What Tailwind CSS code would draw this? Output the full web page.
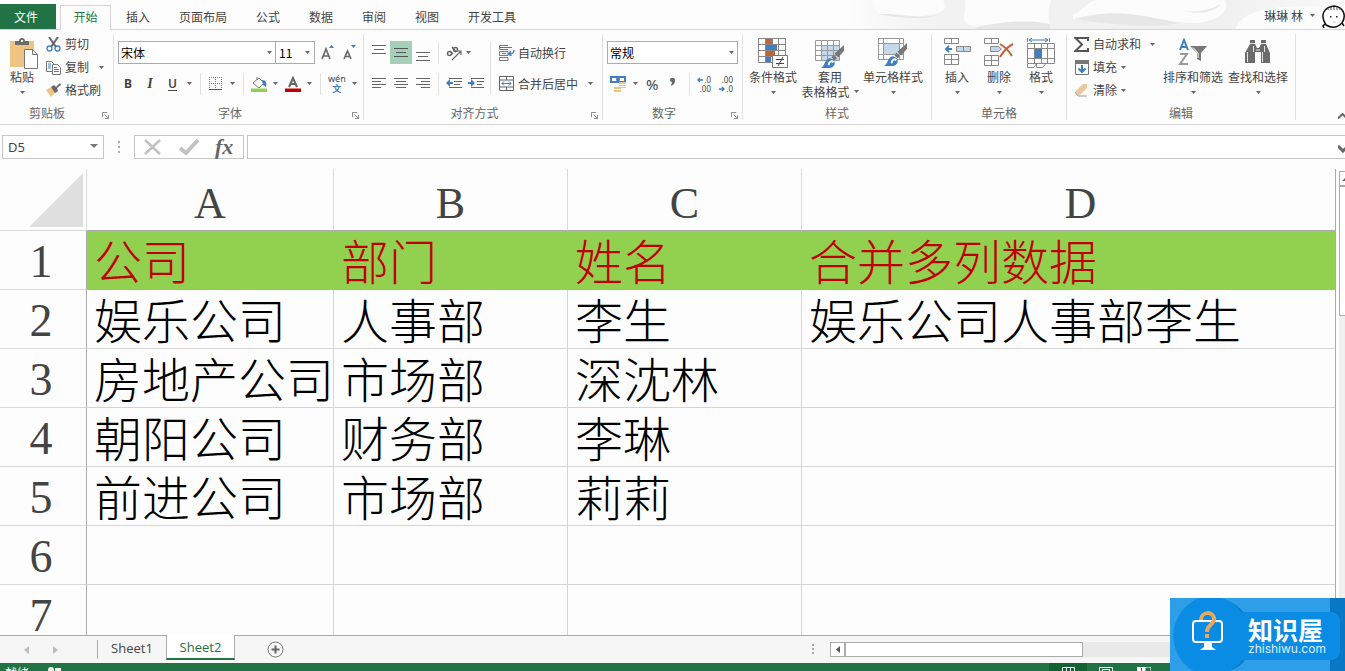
<!DOCTYPE html>
<html lang="zh-CN">
<head>
<meta charset="utf-8">
<meta name="viewport" content="width=device-width, initial-scale=1">
<title>Sheet2</title>
<script src="https://cdn.jsdelivr.net/npm/@tailwindcss/browser@4"></script>
</head>
<body class="flex h-screen flex-col overflow-hidden bg-[#fdfdfd] font-['Noto_Sans_CJK_SC',sans-serif] text-xs leading-4 text-[#444]">

<svg class="hidden">
  <symbol id="caret" viewBox="0 0 5 3"><path d="M0 0h5L2.500 3z" fill="#666"/></symbol>
  <symbol id="launcher" viewBox="0 0 8 8"><path d="M.5 6V.5H6M3 3l4 4M7.500 3.500v4h-4" fill="none" stroke="#777"/></symbol>
  <symbol id="brush" viewBox="0 0 24 24"><path d="M24 0v6l-6 7-4-4z" fill="#777"/><path d="M13 10l4 4-3 2-3-3z" fill="#777"/><path d="M0 24c4-1 4-11 10-10 6 1 6 9-1 10z" fill="#3f7fbf"/><path d="M8 21c0-4 3-5 5-3" fill="none" stroke="#fff" stroke-width="2"/></symbol>
</svg>

<!-- Tab strip -->
<header class="relative flex h-[30px] shrink-0 items-end border-b border-[#d4d4d4]">
  <svg class="absolute right-0 top-0 h-[29px] w-[500px]" viewBox="0 0 500 29" preserveAspectRatio="none">
    <defs><linearGradient id="fade"><stop offset="0" stop-color="#efefef" stop-opacity="0"/><stop offset=".2" stop-color="#f2f2f2"/><stop offset=".75" stop-color="#f0f0f0"/><stop offset="1" stop-color="#f9f9f9"/></linearGradient></defs>
    <path d="M0 0h500v29H0z" fill="url(#fade)"/>
    <path d="M28 0h70c5 10-1 14-15 15-20 4-30-2-50-1zM120 0h86c-3 10-3 15-1 24-35-8-45 5-80 2-12-6-2-14-5-26zM228 15c10-5 14-12 22-15h130c5 12-8 22-30 23-45-1-85-17-122-4z" fill="#fcfcfc"/>
    <path d="M32 14c25-1 40 5 60 1-12 6-45 2-60-1zM135 26c25-4 45-7 70-2v5h-75zM232 19c40-12 65-3 105 4-30 5-75 2-105-4zM338 11c15 2 28-1 38-7-5 8-25 11-38 7z" fill="#e7e7e7"/>
    <path d="M390 29c10-20 35-25 110-22v22z" fill="#fcfcfc"/>
  </svg>
  <button class="h-[25px] w-14 bg-[#217346] pr-1 text-white">文件</button>
  <button class="relative ml-1 -mb-px h-[25px] w-[51px] border border-b-0 border-[#d4d4d4] bg-[#fdfdfd] pb-[2px] text-[#217346]">开始</button>
  <nav class="ml-[15px] flex h-[25px] items-center gap-[29px]">
    <button>插入</button><button>页面布局</button><button>公式</button><button>数据</button><button>审阅</button><button>视图</button><button>开发工具</button>
  </nav>
  <div class="relative ml-auto flex h-[25px] items-center">
    <button class="flex items-center gap-[7px] pb-[2px]">琳琳 林<svg class="h-[3px] w-[5px]"><use href="#caret"/></svg></button>
    <svg class="ml-[7px] h-6 w-[23px]" viewBox="0 0 23 24"><path d="M0 0h23v24H0z" fill="#fff"/><path d="M4 20C-3 9 3 2 12 1c9 1 13 9 8 17-5 5-11 5-16 2zM3 19l-2 2 1 2M20 18l2 3" fill="none" stroke="#111" stroke-width="1.500"/><path d="M6 3v2M9 2v3M12 2v3M15 2v3M18 3v2" stroke="#555"/><path d="M8 11h1.500v1.500H8zM14 11h1.500v1.500H14z" fill="#222"/><path d="M11 17h3" stroke="#e6b8b8"/></svg>
  </div>
</header>

<!-- Ribbon -->
<section class="flex h-[95px] shrink-0 overflow-hidden border-b border-[#d4d4d4] py-1">

  <div class="flex w-[114px] shrink-0 flex-col border-r border-[#e1e1e1]">
    <div class="flex grow">
      <button class="flex w-11 flex-col items-center pt-1">
        <svg class="ml-1 h-[31px] w-7" viewBox="0 0 28 31"><path d="M0 3h24v26H0z" fill="#edc483"/><path d="M5 7V3h4c0-4 6-4 6 0h4v4z" fill="#6b6b6b"/><path d="M11 2h2v2h-2z" fill="#fff"/><path d="M14.500 11.500h8l5 5v14h-13z" fill="#fff" stroke="#777"/><path d="M22.500 11.500v5h5" fill="none" stroke="#777"/></svg>
        <span>粘贴</span><svg class="mt-[6px] h-[3px] w-[5px]"><use href="#caret"/></svg>
      </button>
      <div class="flex flex-col gap-[7px] pl-[2px] pt-[2px]">
        <button class="flex items-center gap-1"><svg class="size-[15px]" viewBox="0 0 15 15"><path d="M3 0l7 10M12 0L5 10" stroke="#666" stroke-width="2"/><circle cx="3.500" cy="11.500" r="2.500" fill="#fff" stroke="#3f7fbf" stroke-width="1.300"/><circle cx="11.500" cy="11.500" r="2.500" fill="#fff" stroke="#3f7fbf" stroke-width="1.300"/></svg>剪切</button>
        <button class="flex items-center gap-1"><svg class="h-[15px] w-[15px]" viewBox="0 0 15 15"><path d="M.5 1.500h5l2 2v8h-7z" fill="#fff" stroke="#777"/><path d="M2 4h3M2 6h3M2 8h3" stroke="#3f7fbf"/><path d="M6.500 4.500h5l3 3v7h-8z" fill="#fff" stroke="#777"/><path d="M8 7.500h3M8 9.500h5M8 11.500h5" stroke="#3f7fbf"/></svg>复制<svg class="ml-[6px] h-[3px] w-[5px]"><use href="#caret"/></svg></button>
        <button class="flex items-center gap-1"><svg class="size-[15px]" viewBox="0 0 15 15"><path d="M0 7l5-3 5 5-5 5z" fill="#edc483"/><path d="M5 4l3-2 2 2 4-4 1 2-4 3 1 3-3 2z" fill="#666"/></svg>格式刷</button>
      </div>
    </div>
    <div class="flex h-5 items-center pt-[6px] text-[#666]"><span class="grow pr-5 text-center">剪贴板</span><button aria-label="剪贴板设置" class="-ml-3 mr-1 mt-1"><svg class="size-[7px]"><use href="#launcher"/></svg></button></div>
  </div>

  <div class="flex w-[250px] shrink-0 flex-col border-r border-[#e1e1e1]">
    <div class="flex grow flex-col">
      <div class="flex h-[37px] items-center pl-1">
        <div class="relative"><select aria-label="字体" class="h-[23px] w-[158px] appearance-none border border-[#ababab] bg-white pl-[2px] text-black"><option>宋体</option></select><svg class="pointer-events-none absolute right-1 top-[10px] h-[3px] w-[5px]"><use href="#caret"/></svg></div>
        <div class="relative -ml-px"><select aria-label="字号" class="h-[23px] w-10 appearance-none border border-[#ababab] bg-white pl-[3px] text-black"><option>11</option></select><svg class="pointer-events-none absolute right-[5px] top-[10px] h-[3px] w-[5px]"><use href="#caret"/></svg></div>
        <button aria-label="增大字号" class="ml-[6px]"><svg class="h-4 w-3.5" viewBox="0 0 14 16"><path d="M1 14L5 4l4 10M2.500 11h5" fill="none" stroke="#666" stroke-width="1.600"/><path d="M8 3l2.500-3L13 3z" fill="#3f7fbf"/></svg></button>
        <button aria-label="减小字号" class="ml-2"><svg class="h-4 w-3.5" viewBox="0 0 14 16"><path d="M1 14l3.500-8L8 14M2.500 11.500h4" fill="none" stroke="#666" stroke-width="1.600"/><path d="M8 0l2.500 3L13 0z" fill="#3f7fbf"/></svg></button>
      </div>
      <div class="flex h-[25px] items-center pl-[10px] font-['Noto_Sans',sans-serif]">
        <button class="w-2 font-bold">B</button>
        <button class="ml-[14px] w-2 font-['Liberation_Serif',serif] text-sm font-bold italic">I</button>
        <button class="ml-[14px] w-2 font-semibold underline underline-offset-2">U</button>
        <svg class="ml-[11px] h-[3px] w-[5px]"><use href="#caret"/></svg>
        <i class="ml-[8px] h-[22px] w-px bg-[#e1e1e1]"></i>
        <button aria-label="边框" class="ml-2"><svg class="size-[13px]" viewBox="0 0 13 13"><path d="M0 .5h13M0 6.500h13M.5 0v12M6.500 0v12M12.500 0v12" stroke="#777" stroke-dasharray="1 1"/><path d="M0 12.500h13" stroke="#555"/></svg></button>
        <svg class="ml-2 h-[3px] w-[5px]"><use href="#caret"/></svg>
        <i class="ml-[8px] h-[22px] w-px bg-[#e1e1e1]"></i>
        <button aria-label="填充颜色" class="ml-[7px]"><svg class="size-4" viewBox="0 0 16 16"><path d="M3 6l5-4 5 5-5 5-6-5zM6 4V1" fill="#fff" stroke="#777"/><path d="M11 4c4 0 5 3 4 7l-3-2z" fill="#3f7fbf"/><path d="M0 12.500h16V16H0z" fill="#92d050"/></svg></button>
        <svg class="ml-[6px] h-[3px] w-[5px]"><use href="#caret"/></svg>
        <button aria-label="字体颜色" class="ml-[7px]"><svg class="size-4" viewBox="0 0 16 16"><path d="M4 11L8 2l4 9M5 8h6" fill="none" stroke="#666" stroke-width="2"/><path d="M0 12.500h16V16H0z" fill="#c00000"/></svg></button>
        <svg class="ml-[6px] h-[3px] w-[5px]"><use href="#caret"/></svg>
        <i class="ml-[8px] h-[22px] w-px bg-[#e1e1e1]"></i>
        <button class="ml-[7px] flex flex-col items-center text-[9px] leading-[10px]"><span>wén</span><span class="font-['Noto_Sans_CJK_SC'] font-bold text-[#3f7fbf]">文</span></button>
        <svg class="ml-[6px] h-[3px] w-[5px]"><use href="#caret"/></svg>
      </div>
    </div>
    <div class="flex h-5 items-center pt-[6px] text-[#666]"><span class="grow pr-[18px] text-center">字体</span><button aria-label="字体设置" class="-ml-3 mr-1 mt-1"><svg class="size-[7px]"><use href="#launcher"/></svg></button></div>
  </div>

  <div class="flex w-[239px] shrink-0 flex-col border-r border-[#e1e1e1]">
    <div class="flex grow">
      <div class="flex flex-col">
        <div class="flex h-[37px] items-center pl-1">
          <button aria-label="顶端对齐" class="flex h-[23px] w-[22px] items-center justify-center"><svg class="h-4 w-3.5"><path d="M0 .5h14M2 4.500h10M0 8.500h14" stroke="#666"/></svg></button>
          <button aria-label="垂直居中" class="flex h-[23px] w-[22px] items-center justify-center bg-[#a6cfba]"><svg class="h-4 w-3.5"><path d="M0 3.500h14M2 7.500h10M0 11.500h14" stroke="#555"/></svg></button>
          <button aria-label="底端对齐" class="flex h-[23px] w-[22px] items-center justify-center"><svg class="h-4 w-3.5"><path d="M0 7.500h14M2 11.500h10M0 15.500h14" stroke="#666"/></svg></button>
          <i class="ml-[4px] h-[22px] w-px bg-[#e1e1e1]"></i>
          <button aria-label="方向" class="ml-[7px]"><svg class="h-4 w-[17px]" viewBox="0 0 17 16"><g fill="none" stroke="#666" stroke-width="1.500"><circle cx="3.500" cy="8.500" r="2"/><path d="M4 6l3 3M6 2l4 5"/><circle cx="9.500" cy="4.500" r="2"/></g><path d="M6 15L15 6M11 6h4v4" fill="none" stroke="#666" stroke-width="1.200"/></svg></button>
          <svg class="ml-[3px] h-[3px] w-[5px]"><use href="#caret"/></svg>
        </div>
        <div class="flex h-[25px] items-center pl-2">
          <button aria-label="左对齐"><svg class="h-3 w-3.5"><path d="M0 .5h14M0 3.500h9M0 6.500h14M0 9.500h9" stroke="#666"/></svg></button>
          <button aria-label="居中" class="ml-2"><svg class="h-3 w-3.5"><path d="M0 .5h14M2 3.500h10M0 6.500h14M2 9.500h10" stroke="#666"/></svg></button>
          <button aria-label="右对齐" class="ml-2"><svg class="h-3 w-3.5"><path d="M0 .5h14M5 3.500h9M0 6.500h14M5 9.500h9" stroke="#666"/></svg></button>
          <i class="ml-2 h-[22px] w-px bg-[#e1e1e1]"></i>
          <button aria-label="减少缩进" class="ml-[7px]"><svg class="h-3 w-4"><path d="M3 .5h13M8 3.500h8M8 6.500h6M3 9.500h13" stroke="#666"/><path d="M0 5l4-4v3h3v2H4v3z" fill="#3f7fbf"/></svg></button>
          <button aria-label="增加缩进" class="ml-[6px]"><svg class="h-3 w-4"><path d="M3 .5h13M9 3.500h7M9 6.500h5M3 9.500h13" stroke="#666"/><path d="M7 5L3 1v3H0v2h3v3z" fill="#3f7fbf"/></svg></button>
        </div>
      </div>
      <i class="ml-[6px] mt-[7px] h-[54px] w-px bg-[#e1e1e1]"></i>
      <div class="flex flex-col pl-2">
        <button class="flex h-[37px] items-center gap-[3px]"><svg class="size-4" viewBox="0 0 16 16"><path d="M9 .5H.5v4H9M.5 6.500H9v4H.5zM.5 12.500H9v3H.5zM3 8.500h4" fill="none" stroke="#777"/><path d="M1 2.500h12" stroke="#3f7fbf"/><path d="M15 5c0 3-1 4-5 4M12 6L9.500 9l3 2" fill="none" stroke="#3f7fbf" stroke-width="1.500"/></svg>自动换行</button>
        <button class="flex h-[25px] items-center gap-[3px]"><svg class="size-4" viewBox="0 0 16 16"><path d="M.5.500h14v14H.5zM.5 4h14M.5 11h14M7.500.5V4M7.500 11v3.500" fill="none" stroke="#666"/><path d="M3 7.500h9M5 5.500l-2 2 2 2M10 5.500l2 2-2 2" fill="none" stroke="#3f7fbf"/></svg>合并后居中<svg class="ml-[7px] h-[3px] w-[5px]"><use href="#caret"/></svg></button>
      </div>
    </div>
    <div class="flex h-5 items-center pt-[6px] text-[#666]"><span class="grow pr-[18px] text-center">对齐方式</span><button aria-label="对齐设置" class="-ml-3 mr-1 mt-1"><svg class="size-[7px]"><use href="#launcher"/></svg></button></div>
  </div>

  <div class="flex w-[140px] shrink-0 flex-col border-r border-[#e1e1e1]">
    <div class="flex grow flex-col">
      <div class="flex h-[37px] items-center pl-1">
        <div class="relative"><select aria-label="数字格式" class="h-[23px] w-[131px] appearance-none border border-[#ababab] bg-white pl-[2px] text-black"><option>常规</option></select><svg class="pointer-events-none absolute right-1 top-[10px] h-[3px] w-[5px]"><use href="#caret"/></svg></div>
      </div>
      <div class="flex h-[25px] items-center pl-[7px]">
        <button aria-label="会计数字格式"><svg class="h-4 w-[17px]" viewBox="0 0 17 16"><path d="M1 1h14v5H1z" fill="#fff" stroke="#3f7fbf" stroke-width="2"/><circle cx="8" cy="3.500" r="2" fill="#3f7fbf"/><path d="M9 6h7v6H9zM4 11h7v5H4z" fill="#edc483"/><path d="M9 8.500h8M9 10.500h8M4 13.500h7" stroke="#fff"/></svg></button>
        <svg class="ml-[6px] h-[3px] w-[5px]"><use href="#caret"/></svg>
        <button aria-label="百分比样式" class="ml-2 w-3 font-['Noto_Sans',sans-serif] text-[15px]">%</button>
        <button aria-label="千位分隔" class="ml-3 mb-1"><svg class="h-2 w-[5px]"><path d="M0 2c0-3 5-3 5 0 0 4-2 5-4 6l1-4C1 4 0 3 0 2z" fill="#666"/></svg></button>
        <i class="ml-[14px] h-[22px] w-px bg-[#e1e1e1]"></i>
        <button class="relative ml-[7px] flex w-[14px] flex-col items-end font-['Noto_Sans',sans-serif] text-[8px] leading-[9px]"><span>.0</span><span>.00</span><svg class="absolute left-0 top-[2px] h-[6px] w-[6px]"><path d="M6 3H1M3 1L1 3l2 2" fill="none" stroke="#3f7fbf" stroke-width="1.400"/></svg></button>
        <button class="relative ml-2 flex w-[14px] flex-col items-end font-['Noto_Sans',sans-serif] text-[8px] leading-[9px]"><span>.00</span><span>.0</span><svg class="absolute bottom-px left-0 h-[6px] w-[6px]"><path d="M0 3h5M3 1l2 2-2 2" fill="none" stroke="#3f7fbf" stroke-width="1.400"/></svg></button>
      </div>
    </div>
    <div class="flex h-5 items-center pt-[6px] text-[#666]"><span class="grow pr-[18px] text-center">数字</span><button aria-label="数字设置" class="-ml-3 mr-1 mt-1"><svg class="size-[7px]"><use href="#launcher"/></svg></button></div>
  </div>

  <div class="flex w-[189px] shrink-0 flex-col border-r border-[#e1e1e1]">
    <div class="flex grow pl-1">
      <button class="flex w-[52px] flex-col items-center pt-1">
        <svg class="h-[31px] w-[31px]" viewBox="0 0 31 31"><path d="M.5.500h27v24H.5z" fill="#fff"/><path d="M8 1h6v5H8zM8 13h9v5H8z" fill="#c0643a"/><path d="M8 7h11v5H8zM8 19h5v5H8z" fill="#3f7fbf"/><path d="M.5.500h27v24H.5zM7.500.5v24M20.500.5v24M.5 6.500h27M.5 12.500h27M.5 18.500h27M14.500.5v6" fill="none" stroke="#888"/><path d="M14.500 17.500h15v12h-15z" fill="#fff" stroke="#777"/><path d="M18 21.500h8M18 25.500h8M25 19l-5 9" stroke="#444"/></svg>
        <span class="whitespace-nowrap">条件格式</span><svg class="mt-[6px] h-[3px] w-[5px]"><use href="#caret"/></svg>
      </button>
      <button class="ml-[2px] flex w-[58px] flex-col items-center pt-1 leading-[15px]">
        <svg class="h-[31px] w-[30px]" viewBox="0 0 30 31"><path d="M.5 2.500h24v20H.5z" fill="#fff"/><path d="M7 8h17v14H7z" fill="#c5d8ea"/><path d="M.5 2.500h24v20H.5zM6.500 2.500v20M12.500 2.500v20M18.500 2.500v20M.5 7.500h24M.5 12.500h24M.5 17.500h24" fill="none" stroke="#999"/><use href="#brush" x="6" y="7" width="23" height="23"/></svg>
        <span>套用</span><span class="flex items-center gap-1 whitespace-nowrap">表格格式<svg class="h-[3px] w-[5px]"><use href="#caret"/></svg></span>
      </button>
      <button class="flex w-[68px] flex-col items-center pt-1">
        <svg class="h-[31px] w-[30px]" viewBox="0 0 30 31"><path d="M.5.500h25v21H.5z" fill="#fff"/><path d="M6 6h15v10H6z" fill="#c5d8ea"/><path d="M.5.500h25v21H.5zM5.500.5v21M21.500.5v21M.5 5.500h25M.5 16.500h25" fill="none" stroke="#999"/><use href="#brush" x="6" y="5" width="23" height="23"/></svg>
        <span class="whitespace-nowrap">单元格样式</span><svg class="mt-[6px] h-[3px] w-[5px]"><use href="#caret"/></svg>
      </button>
    </div>
    <div class="flex h-5 items-center justify-center pt-[6px] text-[#666]">样式</div>
  </div>

  <div class="flex w-[135px] shrink-0 flex-col border-r border-[#e1e1e1]">
    <div class="flex grow pl-1">
      <button class="flex w-[42px] flex-col items-center pt-1">
        <svg class="h-[31px] w-[27px]" viewBox="0 0 27 31"><path d="M.5.500h14v5H.5zM7.500.5v5M.5 16.500h14v10H.5zM7.500 16.500v10M.5 21.500h14" fill="#fff" stroke="#888"/><path d="M12.500 8.500h14v5h-14zM19.500 8.500v5" fill="#c5d8ea" stroke="#888"/><path d="M8 11H2M5 8l-3 3 3 3" fill="none" stroke="#3f7fbf" stroke-width="1.800"/></svg>
        <span>插入</span><svg class="mt-[6px] h-[3px] w-[5px]"><use href="#caret"/></svg>
      </button>
      <button class="flex w-[42px] flex-col items-center pt-1">
        <svg class="h-[31px] w-[30px]" viewBox="0 0 30 31"><path d="M.5.500h14v5H.5zM7.500.5v5M.5 17.500h14v10H.5zM7.500 17.500v10M.5 22.500h14" fill="#fff" stroke="#888"/><path d="M6.500 8.500h8l3 2.500-3 2.500h-8z" fill="#c5d8ea" stroke="#888"/><path d="M16 6c5 3 9 7 12 12M29 6c-6 3-10 8-13 13" fill="none" stroke="#c0643a" stroke-width="2"/></svg>
        <span>删除</span><svg class="mt-[6px] h-[3px] w-[5px]"><use href="#caret"/></svg>
      </button>
      <button class="flex w-[42px] flex-col items-center pt-1">
        <svg class="h-[31px] w-[28px]" viewBox="0 0 28 31"><path d="M.5 0v4M22.500 0v4M2 2h19M5 0L2 2l3 2M18 0l3 2-3 2" fill="none" stroke="#3f7fbf"/><path d="M.5 5.500h27v20H.5zM7.500 5.500v20M14.500 5.500v5M20.500 5.500v20M.5 10.500h27M.5 20.500h27M14.500 20.500v5" fill="#fff" stroke="#888"/><path d="M8 11h7v9H8z" fill="#3f7fbf"/><path d="M.5 26v3.500h6l3-3.500v3.500h6l3-3.500" fill="none" stroke="#888"/></svg>
        <span>格式</span><svg class="mt-[6px] h-[3px] w-[5px]"><use href="#caret"/></svg>
      </button>
    </div>
    <div class="flex h-5 items-center justify-center pt-[6px] text-[#666]">单元格</div>
  </div>

  <div class="flex w-[229px] shrink-0 flex-col border-r border-[#e1e1e1]">
    <div class="flex grow pl-[7px]">
      <div class="flex w-[86px] flex-col gap-[7px] pt-[2px]">
        <button class="flex items-center gap-1"><svg class="h-[15px] w-[15px]" viewBox="0 0 15 15"><path d="M14 4V1H1.500L8 7.500 1.500 14H14v-3" fill="none" stroke="#555" stroke-width="2"/></svg>自动求和<svg class="ml-[5px] h-[3px] w-[5px]"><use href="#caret"/></svg></button>
        <button class="flex items-center gap-1"><svg class="h-[15px] w-[15px]" viewBox="0 0 15 15"><path d="M1.500.500h13v14h-13z" fill="#fff" stroke="#777"/><path d="M1 0h14v4H1z" fill="#777"/><path d="M8 5v7M4.500 8.500L8 12l3.500-3.500" fill="none" stroke="#3f7fbf" stroke-width="2"/></svg>填充<svg class="h-[3px] w-[5px]"><use href="#caret"/></svg></button>
        <button class="flex items-center gap-1"><svg class="h-[15px] w-[15px]" viewBox="0 0 15 15"><path d="M9 1h4v4l-7 7H4L1 9z" fill="#edc6a0"/><path d="M1 9l3 4h9" fill="none" stroke="#999"/></svg>清除<svg class="h-[3px] w-[5px]"><use href="#caret"/></svg></button>
      </div>
      <button class="flex w-[66px] flex-col items-center pt-1">
        <svg class="h-[31px] w-[30px]" viewBox="0 0 30 31"><path d="M2 12L6 2l4 10M3.500 9h5" fill="none" stroke="#3f7fbf" stroke-width="2"/><path d="M2 16h7l-7 10h8" fill="none" stroke="#999" stroke-width="2"/><path d="M12 8h17l-6 7v8l-4-2v-6z" fill="#777"/><path d="M15 9.500l5 5.500v5" fill="none" stroke="#fff"/></svg>
        <span class="whitespace-nowrap">排序和筛选</span><svg class="mt-[6px] h-[3px] w-[5px]"><use href="#caret"/></svg>
      </button>
      <button class="flex w-[64px] flex-col items-center pt-1">
        <svg class="h-[31px] w-[26px]" viewBox="0 0 26 31"><path d="M5 2h5v4l2 4h2l2-4V2h5v4l4 9v10h-9V14h-6v11H0V15l5-9z" fill="#6b6b6b"/><path d="M5 5.500h5M16 5.500h5M2.500 14v10M17.500 14v10M8.500 8v6M19.500 8v6M11 12h4" stroke="#fff" stroke-width=".8"/></svg>
        <span class="whitespace-nowrap">查找和选择</span><svg class="mt-[6px] h-[3px] w-[5px]"><use href="#caret"/></svg>
      </button>
    </div>
    <div class="flex h-5 items-center justify-center pt-[6px] text-[#666]">编辑</div>
  </div>
  <button aria-label="折叠功能区" class="ml-auto self-end pb-px"><svg class="h-[6px] w-[7px]"><path d="M0 5.500L4.500 1l4 4" fill="none" stroke="#666" stroke-width="2"/></svg></button>
</section>

<!-- Formula bar -->
<div class="flex h-11 shrink-0 items-start pl-[2px] pt-[10px]">
  <div class="relative"><input aria-label="名称框" value="D5" class="h-6 w-[102px] border border-[#c6c6c6] bg-white pl-[5px] font-['Noto_Sans',sans-serif] text-[13px]"><svg class="absolute right-[6px] top-[9px] h-1 w-2"><path d="M0 0h8L4 4z" fill="#777"/></svg></div>
  <svg class="ml-[14px] mt-[6px] h-3 w-[3px]"><path d="M0 1h2M0 6h2M0 11h2" stroke="#aaa" stroke-width="2"/></svg>
  <div class="ml-[13px] flex h-6 w-[110px] shrink-0 items-center border border-[#c6c6c6] bg-white">
    <button aria-label="取消" class="ml-2"><svg class="h-4 w-[19px]"><path d="M2 1l15 14M17 1L2 15" stroke="#c2c2c2" stroke-width="2.500"/></svg></button>
    <button aria-label="输入" class="ml-[17px]"><svg class="h-4 w-5"><path d="M1 9l6 5L19 1" fill="none" stroke="#c2c2c2" stroke-width="4"/></svg></button>
    <button class="ml-4 font-['Liberation_Serif',serif] text-[22px] leading-6 font-bold italic text-[#666]">fx</button>
  </div>
  <input aria-label="编辑栏" class="ml-[3px] h-6 min-w-0 grow border border-r-0 border-[#c6c6c6] bg-white px-1">
  <button aria-label="展开编辑栏" class="-ml-[7px] mt-[10px]"><svg class="h-2 w-[7px]"><path d="M0 1l5 5 4-4" fill="none" stroke="#666" stroke-width="3"/></svg></button>
</div>

<!-- Sheet -->
<main class="flex min-h-0 grow overflow-hidden">
  <div class="min-w-0 grow overflow-hidden border-r border-[#ababab]">
    <table class="w-full table-fixed border-separate border-spacing-0 text-left text-[48px] leading-[56px] font-light text-black">
      <colgroup><col class="w-[87px]"><col class="w-[247px]"><col class="w-[234px]"><col class="w-[234px]"><col></colgroup>
      <thead class="font-['Liberation_Serif',serif] text-[44px] text-[#444]">
        <tr class="h-[62px] text-center">
          <td class="border-r border-b border-[#dadada] p-0 align-bottom"><svg class="mb-[3px] ml-auto mr-[3px] h-[54px] w-[54px]"><path d="M54 0v54H0z" fill="#dfdfdf"/></svg></td>
          <th scope="col" class="border-r border-b border-[#dadada] border-b-[#ababab] p-0 pt-2 text-center font-normal leading-[50px]">A</th>
          <th scope="col" class="border-r border-b border-[#dadada] border-b-[#ababab] p-0 pt-2 text-center font-normal leading-[50px]">B</th>
          <th scope="col" class="border-r border-b border-[#dadada] border-b-[#ababab] p-0 pt-2 text-center font-normal leading-[50px]">C</th>
          <th scope="col" class="border-b border-b-[#ababab] p-0 pt-2 pl-6 text-center font-normal leading-[50px]">D</th>
        </tr>
      </thead>
      <tbody class="[&_td]:h-[59px] [&_td]:whitespace-nowrap [&_td]:border-b [&_td]:border-r [&_td]:border-[#d4d4d4] [&_td]:pb-[2px] [&_td]:pt-0 [&_td]:pr-0 [&_td]:pl-[7px] [&_td:last-child]:border-r-0 [&_th]:border-b [&_th]:border-r [&_th]:border-b-[#dadada] [&_th]:border-r-[#ababab] [&_th]:p-0 [&_th]:pt-1 [&_th]:pr-1 [&_th]:text-center [&_th]:text-[46px] [&_th]:leading-[54px] [&_th]:font-['Liberation_Serif',serif] [&_th]:font-normal [&_th]:text-[#444]">
        <tr class="bg-[#92d050] text-[#c00000] [&>td]:border-[#92d050]"><th scope="row" class="bg-[#fdfdfd]">1</th><td>公司</td><td>部门</td><td>姓名</td><td>合并多列数据</td></tr>
        <tr><th scope="row">2</th><td>娱乐公司</td><td>人事部</td><td>李生</td><td>娱乐公司人事部李生</td></tr>
        <tr><th scope="row">3</th><td>房地产公司</td><td>市场部</td><td>深沈林</td><td></td></tr>
        <tr><th scope="row">4</th><td>朝阳公司</td><td>财务部</td><td>李琳</td><td></td></tr>
        <tr><th scope="row">5</th><td>前进公司</td><td>市场部</td><td>莉莉</td><td></td></tr>
        <tr><th scope="row">6</th><td></td><td></td><td></td><td></td></tr>
        <tr><th scope="row">7</th><td></td><td></td><td></td><td></td></tr>
      </tbody>
    </table>
  </div>
  <div class="ml-[3px] mt-[2px] w-[6px] shrink-0 bg-[#f0f0f0]">
    <div class="flex h-[15px] items-center border border-r-0 border-[#ababab] bg-white"><svg class="ml-[2px] h-1 w-[3px]"><path d="M0 4l3-3v3z" fill="#666"/></svg></div>
    <div class="h-[130px] border border-r-0 border-[#ababab] bg-white"></div>
  </div>
</main>

<!-- Sheet tabs -->
<footer class="relative shrink-0">
  <div class="flex h-7 border-t border-[#ababab] bg-[#f6f6f6] font-['Open_Sans',sans-serif] text-[13px]">
    <div class="my-1 flex w-[98px] items-center border-r border-[#ababab] pl-6">
      <button aria-label="上一个工作表"><svg class="h-2 w-[5px]"><path d="M5 0v8L0 4z" fill="#bdbdbd"/></svg></button>
      <button aria-label="下一个工作表" class="ml-6"><svg class="h-2 w-[5px]"><path d="M0 0v8l5-4z" fill="#bdbdbd"/></svg></button>
    </div>
    <button class="w-[68px] pb-1">Sheet1</button>
    <button class="-mt-px mb-[3px] w-[69px] border-x border-b-2 border-x-[#ababab] border-b-[#217346] bg-white text-[#217346]">Sheet2</button>
    <button aria-label="新工作表" class="ml-8"><svg class="size-[17px]"><circle cx="8.500" cy="8.500" r="7.500" fill="none" stroke="#777"/><path d="M8.500 4.500v8M4.500 8.500h8" stroke="#666" stroke-width="2"/></svg></button>
    <svg class="ml-auto mt-2 h-[11px] w-[2px] shrink-0"><path d="M0 1h2M0 5h2M0 9h2" stroke="#aaa" stroke-width="2"/></svg>
    <div class="ml-4 mt-[6px] flex h-[15px] w-[515px] shrink-0 bg-[#e9e9e9]">
      <button aria-label="向左滚动" class="flex w-[15px] items-center justify-center border border-[#ababab] bg-white"><svg class="h-[7px] w-1"><path d="M4 0v7L0 3.500z" fill="#555"/></svg></button>
      <div class="w-[238px] border border-[#ababab] bg-white"></div>
    </div>
  </div>
  <div class="flex h-2 overflow-hidden bg-[#217346] pl-[5px] text-white">
    <span class="pt-[2px]">就绪</span>
    <svg class="ml-[19px] mt-1 h-4 w-[13px]"><circle cx="3" cy="3" r="3" fill="#eee"/><path d="M7 1h6v8H7z" fill="#eee"/></svg>
    <div class="ml-auto mr-[182px] flex">
      <div class="flex w-[38px] justify-center bg-[#0f6333] pt-1"><svg class="h-4 w-[13px]"><path d="M.5.500h12v9H.5zM4.500 0v9M8.500 0v9" fill="none" stroke="#fff"/></svg></div>
      <div class="flex w-[38px] justify-center pt-1"><svg class="h-4 w-[14px]"><path d="M.5.500h13v9H.5zM3.500 9V2.500h7V9" fill="none" stroke="#fff"/></svg></div>
      <div class="flex w-[38px] justify-center pt-1"><svg class="h-4 w-[14px]"><path d="M0 0h14v9H0z" fill="#fff"/><path d="M4.500 1v9M9 1h4v9H9z" fill="#217346" stroke="#217346"/></svg></div>
    </div>
  </div>

  <!-- Site badge over the corner of the window -->
  <a href="#" class="absolute bottom-0 right-0 block h-[73px] w-[175px] overflow-hidden bg-[#2f9ee8]">
    <svg class="absolute inset-0 size-full" viewBox="0 0 175 73"><path d="M160 0h15v73h-15z" fill="#0878c4"/><path d="M40 0c18 0 28 6 38 20v38c-8 12-16 15-24 15z" fill="#0878c4"/><path d="M29 0h22c10 3 16 8 20 14h90c6 0 9 4 9 9v30c0 5-3 9-9 9H73c-5 6-10 9-15 11H23C-4 56-4 15 29 0z" fill="#0a8ce4"/><rect x="23" y="23" width="29" height="21" rx="3" fill="none" stroke="#fff" stroke-width="2"/><path d="M34 45h8v4l4 3H30l4-3z" fill="#fff"/><path d="M31 22c0-9 13-9 13-1 0 6-7 5-7 13M37 36v4" fill="none" stroke="#e9a95b" stroke-width="4"/></svg>
    <span class="absolute left-[78px] top-[17px] text-[25px] leading-[28px] font-bold text-white">知识屋</span>
    <span class="absolute left-[78px] top-[43px] font-['Inter',sans-serif] text-xs text-[#dff0ff]">zhishiwu.com</span>
  </a>
</footer>
</body>
</html>
